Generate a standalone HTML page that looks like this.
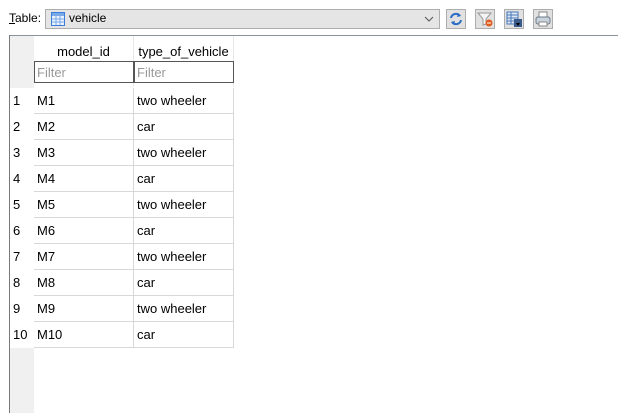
<!DOCTYPE html>
<html><head><style>
body{margin:0;width:618px;height:413px;background:#fff;font-family:"Liberation Sans",Arial,sans-serif;font-size:13px;color:#000;position:relative;overflow:hidden}
.a{position:absolute}
.cell{position:absolute;border-right:1px solid #d8d8d8;border-bottom:1px solid #d8d8d8;box-sizing:border-box;padding-left:3px;line-height:26px}
.btn{position:absolute;top:9px;width:20px;height:20px;box-sizing:border-box;border:1px solid #adadad;background:#e1e1e1}
</style></head><body>
<div class="a" style="left:9px;top:11px;font-size:12px"><u>T</u>able:</div>
<div class="a" style="left:45px;top:9px;width:395px;height:20px;box-sizing:border-box;border:1px solid #adadad;background:#e5e5e5"></div>
<svg class="a" style="left:51px;top:12px" width="14" height="14"><rect x="0.5" y="0.5" width="13" height="13" fill="#eaf2fb" stroke="#3b7dd8"/><rect x="1" y="1" width="12" height="3" fill="#7aaae8"/><path d="M1 7h12M1 10h12M5 4v9M9 4v9" stroke="#7aaae8"/></svg>
<div class="a" style="left:69px;top:11px;font-size:12px">vehicle</div>
<svg class="a" style="left:424px;top:15px" width="10" height="8"><path d="M1 2l4 4 4-4" stroke="#555" fill="none"/></svg>
<div class="btn" style="left:446px"></div>
<svg class="a" style="left:448px;top:11px" width="16" height="16"><path d="M3 7a5 5 0 0 1 9-2M13 9a5 5 0 0 1-9 2" stroke="#2b6cc4" stroke-width="2" fill="none"/><path d="M10 2l3 3-4 1zM6 14l-3-3 4-1z" fill="#2b6cc4"/></svg>
<div class="btn" style="left:475px"></div>
<svg class="a" style="left:477px;top:11px" width="16" height="16"><path d="M1 2h13l-5 6v5l-3 1V8z" fill="#f4f4f4" stroke="#999"/><circle cx="12" cy="12" r="3.5" fill="#e05a1c"/><path d="M10 12h4" stroke="#fff"/></svg>
<div class="btn" style="left:504px"></div>
<svg class="a" style="left:506px;top:11px" width="16" height="16"><rect x="1" y="1" width="11" height="12" fill="#dde8f5" stroke="#4a78b8"/><path d="M1 4h11M1 7h11M1 10h11M5 1v12" stroke="#4a78b8"/><rect x="8" y="8" width="8" height="8" fill="#3a5a8a"/><path d="M10 12h4l-2 3z" fill="#000"/></svg>
<div class="btn" style="left:533px"></div>
<svg class="a" style="left:535px;top:11px" width="16" height="16"><rect x="4" y="1" width="8" height="6" fill="#fff" stroke="#888"/><rect x="1" y="6" width="14" height="7" rx="2" fill="#c9d3de" stroke="#6d7a88"/><rect x="4" y="11" width="8" height="4" fill="#fff" stroke="#888"/></svg>
<div class="a" style="left:9px;top:35px;width:609px;height:1px;background:#8a939b"></div>
<div class="a" style="left:9px;top:35px;width:1px;height:378px;background:#7a7a7a"></div>
<div class="a" style="left:10px;top:36px;width:24px;height:377px;background:#f0f0f0"></div>
<div class="a" style="left:34px;top:36px;width:200px;height:51px;background:#fff"></div>
<div class="a" style="left:133px;top:36px;width:1px;height:51px;background:#e8e8e8"></div>
<div class="a" style="left:233px;top:36px;width:1px;height:51px;background:#e8e8e8"></div>
<div class="a" style="left:34px;top:44px;width:99px;text-align:center">model_id</div>
<div class="a" style="left:134px;top:44px;width:99px;text-align:center">type_of_vehicle</div>
<div class="a" style="left:34px;top:61px;width:100px;height:22px;box-sizing:border-box;border:1px solid #555;color:#999;padding:3px 0 0 2px">Filter</div>
<div class="a" style="left:134px;top:61px;width:100px;height:22px;box-sizing:border-box;border:1px solid #555;color:#999;padding:3px 0 0 2px">Filter</div>
<div id="rows"></div>
<script>
var h='',d=[['M1','two wheeler'],['M2','car'],['M3','two wheeler'],['M4','car'],['M5','two wheeler'],['M6','car'],['M7','two wheeler'],['M8','car'],['M9','two wheeler'],['M10','car']];
for(var i=0;i<10;i++){var y=88+i*26;
h+='<div class="a" style="left:10px;top:'+y+'px;width:24px;height:26px;background:#fff;line-height:26px;padding-left:3px;box-sizing:border-box">'+(i+1)+'</div>';
h+='<div class="cell" style="left:34px;top:'+y+'px;width:100px;height:26px">'+d[i][0]+'</div>';
h+='<div class="cell" style="left:134px;top:'+y+'px;width:100px;height:26px">'+d[i][1]+'</div>';}
document.getElementById('rows').innerHTML=h;
</script>
</body></html>
